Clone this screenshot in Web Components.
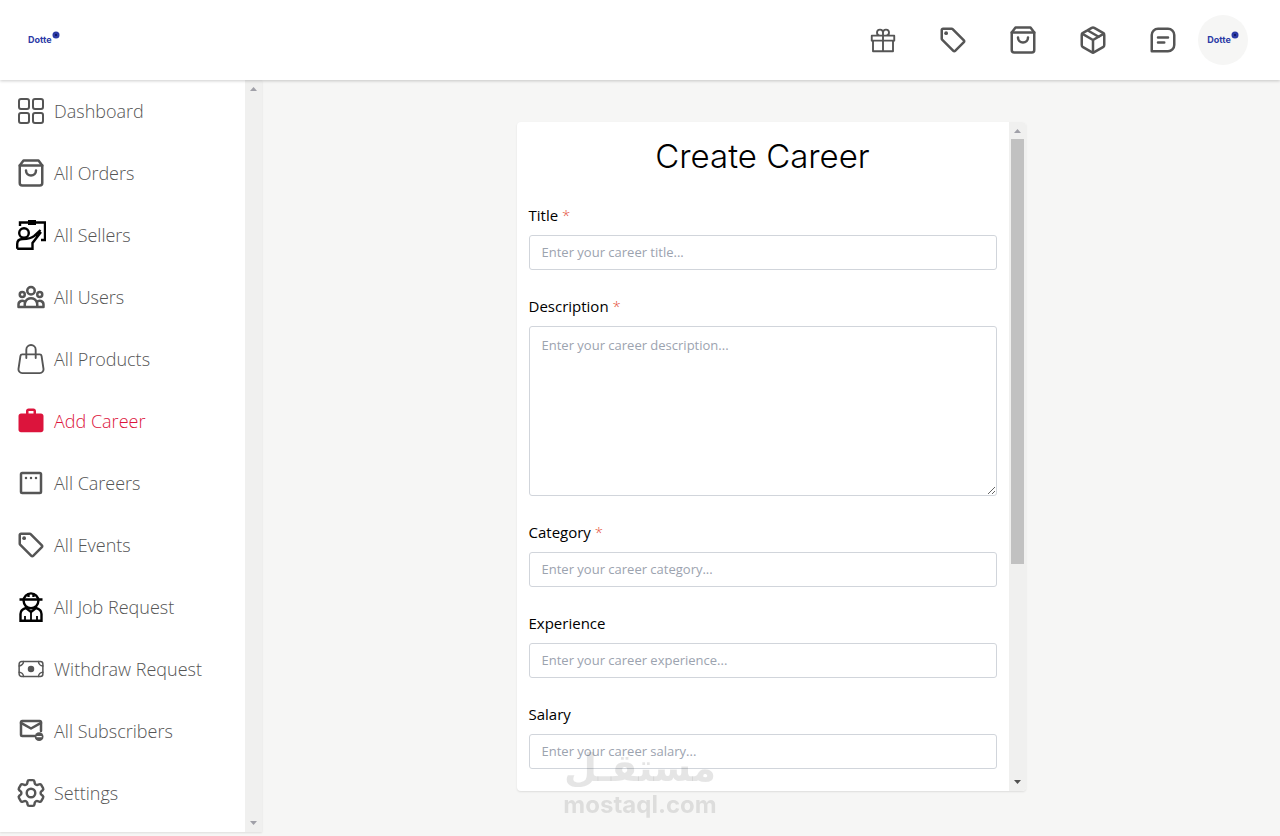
<!DOCTYPE html>
<html lang="en">
<head>
    <meta charset="UTF-8">
    <meta name="viewport" content="width=device-width, initial-scale=1.0">
    <title>Create Career</title>
    <style>
        body {
            --line: #555;
            --accent: crimson;
            --page: #f6f6f5;
            --rail: #f0f0ef;
            margin: 0;
            background: var(--page);
            font-family: "Open Sans", "Noto Sans", sans-serif;
        }
    </style>
</head>
<body>
    <dashboard-page></dashboard-page>
    <script>
        const stroke = (inner, width = 2, box = '0 0 24 24') => `<svg viewBox="${box}" fill="none" stroke="currentColor" stroke-width="${width}" stroke-linecap="round" stroke-linejoin="round">${inner}</svg>`
        const fill = (inner, box = '0 0 24 24') => `<svg viewBox="${box}" fill="currentColor">${inner}</svg>`

        const icons = {
            dashboard: stroke('<rect x="3" y="3" width="10" height="10" rx="2"/><rect x="17" y="3" width="10" height="10" rx="2"/><rect x="3" y="17" width="10" height="10" rx="2"/><rect x="17" y="17" width="10" height="10" rx="2"/>', 2, '0 0 30 30'),
            bag: stroke('<path d="M6 2L3 6v14a2 2 0 0 0 2 2h14a2 2 0 0 0 2-2V6l-3-4z"/><path d="M3 6h18M16 10a4 4 0 0 1-8 0"/>'),
            teacher: `<svg viewBox="0 0 30 30" fill="none" stroke="#000" stroke-width="2.400"><path d="M4 6V2.500h25V20h-4"/><path d="M12 0h8v5h-8z" fill="#000" stroke="none"/><circle cx="8" cy="13" r="4.800"/><path d="M1.200 28.800V24c0-3.500 2.500-5 5.500-5 5.500 0 9-.8 11.300-2.800l6.500-6.200M25 12l-8.500 11v5.800H1.200M19.500 14.500l2.500 2.500"/></svg>`,
            users: stroke('<path d="M17 20h5v-2a3 3 0 00-5.356-1.857M17 20H7m10 0v-2c0-.656-.126-1.283-.356-1.857M7 20H2v-2a3 3 0 015.356-1.857M7 20v-2c0-.656.126-1.283.356-1.857m0 0a5.002 5.002 0 019.288 0M15 7a3 3 0 11-6 0 3 3 0 016 0zm6 3a2 2 0 11-4 0 2 2 0 014 0zM7 10a2 2 0 11-4 0 2 2 0 014 0z"/>'),
            handbag: fill('<path d="M8 1a2 2 0 0 1 2 2v2H6V3a2 2 0 0 1 2-2m3 4V3a3 3 0 1 0-6 0v2H3.360a1.500 1.500 0 0 0-1.483 1.277L.85 13.130A2.500 2.500 0 0 0 3.322 16h9.355a2.500 2.500 0 0 0 2.473-2.870l-1.028-6.853A1.500 1.500 0 0 0 12.640 5zm-1 1v1.500a.5.5 0 0 0 1 0V6h1.639a.5.5 0 0 1 .494.426l1.028 6.851A1.500 1.500 0 0 1 12.678 15H3.322a1.500 1.500 0 0 1-1.483-1.723l1.028-6.851A.5.5 0 0 1 3.360 6H5v1.500a.5.5 0 1 0 1 0V6z"/>', '0 0 16 16'),
            work: fill('<path d="M20 6h-4V4c0-1.110-.89-2-2-2h-4c-1.110 0-2 .89-2 2v2H4c-1.110 0-1.990.89-1.990 2L2 19c0 1.110.89 2 2 2h16c1.110 0 2-.89 2-2V8c0-1.110-.89-2-2-2zm-6 0h-4V4h4v2z"/>'),
            board: stroke('<rect x="4" y="4" width="16" height="16" rx="1"/><path d="M8 8h.01M12 8h.01M16 8h.01"/>'),
            tag: fill('<path d="M21.410 11.580l-9-9C12.050 2.220 11.550 2 11 2H4c-1.100 0-2 .9-2 2v7c0 .55.22 1.050.59 1.420l9 9c.36.36.86.58 1.410.58s1.050-.22 1.410-.59l7-7c.37-.36.59-.86.59-1.410s-.23-1.060-.59-1.420zM13 20.010L4 11V4h7v-.01l9 9-7 7.020z"/><circle cx="6.500" cy="6.500" r="1.500"/>'),
            worker: `<svg viewBox="0 0 30 30" fill="none" stroke="#000" stroke-width="2.400"><circle cx="15" cy="8.800" r="7.400"/><path d="M3.500 7.500h23M12.500 1.500v3.500M17.500 1.500v3.500"/><path d="M4.500 28.800V22c0-3.500 2-5 5.500-6l5 4 5-4c3.500 1 5.500 2.500 5.500 6v6.800z"/><path d="M15 20v9M9 24v5M21 24v5" stroke-width="1.800"/></svg>`,
            money: stroke('<rect x="2.500" y="6" width="19" height="12" rx="2"/><path d="M2.500 9.500A3.500 3.500 0 0 0 6 6M18 6a3.500 3.500 0 0 0 3.500 3.500M21.500 14.500A3.500 3.500 0 0 0 18 18M6 18a3.500 3.500 0 0 0-3.500-3.500"/><circle cx="12" cy="12" r="2" fill="currentColor"/>', 1.200),
            mail: stroke('<path d="M15 16H5a1 1 0 0 1-1-1V5a1 1 0 0 1 1-1h14a1 1 0 0 1 1 1v7"/><path d="M4 5.500l8 4.500 8-4.500"/><circle cx="18.500" cy="16.500" r="3.500" fill="currentColor" stroke="none"/><path d="M16.800 16.500h3.400" stroke="#fff" stroke-width="1"/>'),
            settings: stroke('<path d="M9.594 3.940c.09-.542.56-.94 1.110-.94h2.593c.55 0 1.020.398 1.110.94l.213 1.281c.063.374.313.686.645.87.074.04.147.083.22.127.325.196.72.257 1.075.124l1.217-.456a1.125 1.125 0 0 1 1.370.49l1.296 2.247a1.125 1.125 0 0 1-.26 1.431l-1.003.827c-.293.241-.438.613-.43.992a7.723 7.723 0 0 1 0 .255c-.008.378.137.75.43.991l1.004.827c.424.35.534.955.26 1.430l-1.298 2.247a1.125 1.125 0 0 1-1.369.491l-1.217-.456c-.355-.133-.75-.072-1.076.124a6.470 6.470 0 0 1-.22.128c-.331.183-.581.495-.644.869l-.213 1.281c-.09.543-.56.94-1.110.94h-2.594c-.55 0-1.019-.398-1.110-.94l-.213-1.281c-.062-.374-.312-.686-.644-.87a6.520 6.520 0 0 1-.22-.127c-.325-.196-.72-.257-1.076-.124l-1.217.456a1.125 1.125 0 0 1-1.369-.49l-1.297-2.247a1.125 1.125 0 0 1 .26-1.431l1.004-.827c.292-.24.437-.613.43-.991a6.932 6.932 0 0 1 0-.255c.007-.38-.138-.751-.43-.992l-1.004-.827a1.125 1.125 0 0 1-.26-1.430l1.297-2.247a1.125 1.125 0 0 1 1.370-.491l1.216.456c.356.133.751.072 1.076-.124.072-.044.146-.086.22-.128.332-.183.582-.495.644-.869l.214-1.280Z"/><circle cx="12" cy="12" r="3"/>', 1.700, '1.500 1.500 21 21'),
            gift: stroke('<path d="M3 8.500h18v4H3zM4 12.500h16V21H4zM12 8.500V21M12 8.500H9.500A2.400 2.400 0 1 1 12 6zm0 0h2.500A2.400 2.400 0 1 0 12 6z"/>', 1.500),
            box: stroke('<path d="M16.500 9.400L7.500 4.210M21 16V8a2 2 0 0 0-1-1.730l-7-4a2 2 0 0 0-2 0l-7 4A2 2 0 0 0 3 8v8a2 2 0 0 0 1 1.730l7 4a2 2 0 0 0 2 0l7-4A2 2 0 0 0 21 16z"/><path d="M3.270 6.960L12 12.010l8.730-5.050M12 22.080V12"/>'),
            message: stroke('<path d="M3 21V8a5 5 0 0 1 5-5h8a5 5 0 0 1 5 5v8a5 5 0 0 1-5 5zM8 10h8M8 14h5"/>')
        }

        class AppIcon extends HTMLElement {
            constructor() {
                super()
                this.attachShadow({ mode: 'open' }).innerHTML = /* html */`
                    <style>
                        :host { display: block; width: 30px; height: 30px; flex: none; }
                        svg { display: block; width: 100%; height: 100%; }
                    </style>
                    ${icons[this.getAttribute('name')]}
                `
            }
        }

        class BrandLogo extends HTMLElement {
            constructor() {
                super()
                this.attachShadow({ mode: 'open' }).innerHTML = /* html */`
                    <style>
                        :host {
                            display: flex;
                            color: #2b3aa6;
                            font: bold 9px/18px Inter, sans-serif;
                        }
                        svg { display: block; width: 8px; height: 8px; }
                    </style>
                    <span>Dotte</span>
                    <svg viewBox="0 0 8 8"><circle cx="4" cy="4" r="3.500" fill="#2b3aa6"/><path d="M3 3l2 2M5 3L3 5" stroke="#101a66"/></svg>
                `
            }
        }

        class TopBar extends HTMLElement {
            constructor() {
                super()
                this.attachShadow({ mode: 'open' }).innerHTML = /* html */`
                    <style>
                        :host {
                            display: flex;
                            align-items: center;
                            justify-content: space-between;
                            height: 80px;
                            box-sizing: border-box;
                            padding: 0 32px 0 28px;
                            background: #fff;
                            box-shadow: 0 1px 3px rgba(0, 0, 0, .2);
                            position: relative;
                        }
                        a { display: block; color: var(--line); text-decoration: none; }
                        nav { display: flex; align-items: center; gap: 40px; }
                        .right { display: flex; align-items: center; gap: 20px; }
                        .avatar {
                            display: grid;
                            place-items: center;
                            width: 50px;
                            height: 50px;
                            border-radius: 50%;
                            background: var(--page);
                        }
                    </style>
                    <a href="#home"><brand-logo></brand-logo></a>
                    <div class="right">
                        <nav>
                            ${['gift', 'tag', 'bag', 'box', 'message'].map(name => `<a href="#${name}" aria-label="${name}"><app-icon name="${name}"></app-icon></a>`).join('')}
                        </nav>
                        <a class="avatar" href="#profile"><brand-logo></brand-logo></a>
                    </div>
                `
            }
        }

        class NavItem extends HTMLElement {
            constructor() {
                super()
                this.attachShadow({ mode: 'open' }).innerHTML = /* html */`
                    <style>
                        :host { display: block; color: var(--line); }
                        :host([active]) { color: var(--accent); }
                        a {
                            display: flex;
                            align-items: center;
                            gap: 8px;
                            padding: 16px;
                            color: inherit;
                            font-size: 18px;
                            font-weight: 300;
                            line-height: 30px;
                            text-decoration: none;
                        }
                    </style>
                    <a href="#"><app-icon name="${this.getAttribute('icon')}"></app-icon><slot></slot></a>
                `
            }
        }

        /* content on the left, rail with two arrows on the right */
        class ScrollPanel extends HTMLElement {
            constructor() {
                super()
                this.attachShadow({ mode: 'open' }).innerHTML = /* html */`
                    <style>
                        :host {
                            display: flex;
                            overflow: hidden;
                            background: #fff;
                            box-shadow: 0 1px 2px rgba(0, 0, 0, .1);
                        }
                        .view {
                            flex: 1;
                            min-width: 0;
                            overflow-y: auto;
                            scrollbar-width: none;
                        }
                        .rail {
                            display: flex;
                            flex-direction: column;
                            width: 17px;
                            background: var(--rail);
                        }
                        .track { flex: 1; padding: 0 2px; }
                        .thumb { height: 67%; background: #c1c1c1; }
                        :host(:not([thumb])) .thumb { display: none; }
                        svg { display: block; width: 17px; height: 17px; fill: #a0a0a8; }
                        :host([thumb]) .down { fill: #505050; }
                    </style>
                    <div class="view"><slot></slot></div>
                    <div class="rail" aria-hidden="true">
                        <svg viewBox="0 0 17 17"><path d="M5 11l3.500-4 3.500 4z"/></svg>
                        <div class="track"><div class="thumb"></div></div>
                        <svg class="down" viewBox="0 0 17 17"><path d="M5 6l3.500 4 3.500-4z"/></svg>
                    </div>
                `
            }
        }

        class FormField extends HTMLElement {
            constructor() {
                super()
                const hint = this.getAttribute('placeholder')
                this.attachShadow({ mode: 'open' }).innerHTML = /* html */`
                    <style>
                        :host { display: block; }
                        label {
                            display: block;
                            margin-bottom: 8px;
                            font-size: 15px;
                            line-height: 24px;
                        }
                        .star { color: #e5533d; font-weight: 300; }
                        input, textarea {
                            display: block;
                            box-sizing: border-box;
                            width: 100%;
                            height: 35px;
                            margin: 0;
                            padding: 0 12px;
                            border: 1px solid #d1d5db;
                            border-radius: 3px;
                            background: #fff;
                            font: 13px/20px "Open Sans", "Noto Sans", sans-serif;
                        }
                        textarea { height: 170px; padding: 8px 12px; }
                        ::placeholder { color: #9ca3af; opacity: 1; }
                    </style>
                    <label for="field"><slot></slot>${this.hasAttribute('required') ? ' <span class="star">*</span>' : ''}</label>
                    ${this.hasAttribute('multiline')
                        ? `<textarea id="field" placeholder="${hint}"></textarea>`
                        : `<input id="field" type="text" placeholder="${hint}">`}
                `
            }
        }

        class WaterMark extends HTMLElement {
            constructor() {
                super()
                this.attachShadow({ mode: 'open' }).innerHTML = /* html */`
                    <style>
                        :host {
                            position: fixed;
                            left: 0;
                            right: 0;
                            bottom: 16px;
                            color: rgba(0, 0, 0, .1);
                            text-align: center;
                            pointer-events: none;
                        }
                        div { font: bold 24px/30px Inter, sans-serif; }
                        .ar { font: bold 38px/44px "DejaVu Sans", sans-serif; }
                    </style>
                    <div class="ar" lang="ar" dir="rtl">مستقـل</div>
                    <div>mostaql.com</div>
                `
            }
        }

        class DashboardPage extends HTMLElement {
            constructor() {
                super()
                this.attachShadow({ mode: 'open' }).innerHTML = /* html */`
                    <style>
                        :host { display: block; min-height: 100vh; }
                        .layout { display: grid; grid-template-columns: 262px 1fr; }
                        .side { height: 90vh; }
                        main { display: grid; place-items: center; }
                        .card { width: 50%; height: 80vh; border-radius: 4px; }
                        form { display: grid; gap: 24px; padding: 12px; }
                        h1 {
                            margin: 0;
                            color: #000;
                            font: 300 33px/45px Inter, sans-serif;
                            text-align: center;
                        }
                    </style>
                    <top-bar></top-bar>
                    <div class="layout">
                        <scroll-panel class="side">
                            <nav-item icon="dashboard">Dashboard</nav-item>
                            <nav-item icon="bag">All Orders</nav-item>
                            <nav-item icon="teacher">All Sellers</nav-item>
                            <nav-item icon="users">All Users</nav-item>
                            <nav-item icon="handbag">All Products</nav-item>
                            <nav-item icon="work" active>Add Career</nav-item>
                            <nav-item icon="board">All Careers</nav-item>
                            <nav-item icon="tag">All Events</nav-item>
                            <nav-item icon="worker">All Job Request</nav-item>
                            <nav-item icon="money">Withdraw Request</nav-item>
                            <nav-item icon="mail">All Subscribers</nav-item>
                            <nav-item icon="settings">Settings</nav-item>
                        </scroll-panel>
                        <main>
                            <scroll-panel class="card" thumb>
                                <form>
                                    <h1>Create Career</h1>
                                    <form-field required placeholder="Enter your career title...">Title</form-field>
                                    <form-field required multiline placeholder="Enter your career description...">Description</form-field>
                                    <form-field required placeholder="Enter your career category...">Category</form-field>
                                    <form-field placeholder="Enter your career experience...">Experience</form-field>
                                    <form-field placeholder="Enter your career salary...">Salary</form-field>
                                </form>
                            </scroll-panel>
                        </main>
                    </div>
                    <water-mark></water-mark>
                `
            }
        }

        customElements.define('app-icon', AppIcon)
        customElements.define('brand-logo', BrandLogo)
        customElements.define('top-bar', TopBar)
        customElements.define('nav-item', NavItem)
        customElements.define('scroll-panel', ScrollPanel)
        customElements.define('form-field', FormField)
        customElements.define('water-mark', WaterMark)
        customElements.define('dashboard-page', DashboardPage)
    </script>
</body>
</html>
